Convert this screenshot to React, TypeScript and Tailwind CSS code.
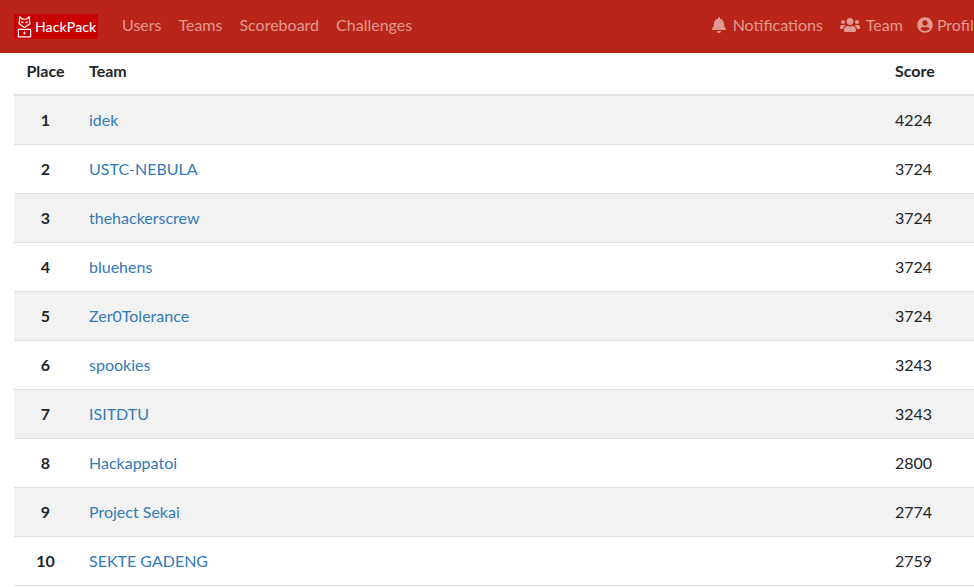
import { FaBell, FaUsers, FaUserCircle } from 'react-icons/fa';

const rows = [
  { place: 1, team: 'idek', score: 4224 },
  { place: 2, team: 'USTC-NEBULA', score: 3724 },
  { place: 3, team: 'thehackerscrew', score: 3724 },
  { place: 4, team: 'bluehens', score: 3724 },
  { place: 5, team: 'Zer0Tolerance', score: 3724 },
  { place: 6, team: 'spookies', score: 3243 },
  { place: 7, team: 'ISITDTU', score: 3243 },
  { place: 8, team: 'Hackappatoi', score: 2800 },
  { place: 9, team: 'Project Sekai', score: 2774 },
  { place: 10, team: 'SEKTE GADENG', score: 2759 },
];

const Logo = () => (
  <a className="flex h-[25px] w-[84px] shrink-0 items-center bg-[#c90000] pl-[3px] text-white">
    <svg viewBox="0 0 16 24" className="h-[23px] w-[15px]" fill="none" stroke="white" strokeWidth="1.3" strokeLinejoin="round">
      <path d="M3 1.5 L5.5 4 H10.5 L13 1.5 L13.5 7 Q14.5 9 12 10.5 L8 13 L4 10.5 Q1.5 9 2.5 7 Z" />
      <path d="M4.5 7 L7 8 M11.5 7 L9 8" />
      <path d="M1.5 15 H14.5 V23 H1.5 Z" />
      <path d="M6.5 19 H9.5 M8 17.5 V20.5" strokeWidth="1" />
    </svg>
    <span className="ml-[3px] font-['Lato',sans-serif] text-[14px] font-medium leading-none tracking-[0.1px]">HackPack</span>
  </a>
);

export default function App() {
  return (
    <div className="h-[587px] w-[974px] overflow-hidden bg-white font-['Lato',sans-serif] text-[16px] text-[#212529]">
      <nav className="flex h-[53px] items-center whitespace-nowrap bg-[#b92518] pl-[14px] text-[#e09890]">
        <Logo />
        <div className="mb-[4px] ml-[24px] flex shrink-0 gap-[17px]">
          <a>Users</a>
          <a>Teams</a>
          <a>Scoreboard</a>
          <a>Challenges</a>
        </div>
        <div className="mb-[4px] ml-[299.5px] flex shrink-0">
          <a className="mr-[17px] flex items-center gap-[7px]">
            <FaBell className="h-[16px] w-[14px]" />
            Notifications
          </a>
          <a className="mr-[14px] flex items-center gap-[6px]">
            <FaUsers className="h-[16px] w-[20px]" />
            Team
          </a>
          <a className="flex items-center gap-[4px]">
            <FaUserCircle className="h-[16px] w-[16px]" />
            Profile
          </a>
        </div>
      </nav>
      <div className="pl-[14px]">
        <table className="w-[960px] table-fixed border-collapse">
          <thead>
            <tr className="h-[42px] border-b-2 border-[#dee2e6] text-left font-bold">
              <th className="w-[63px] pb-[5px] text-center">Place</th>
              <th className="w-[818px] pb-[5px] pl-[12px]">Team</th>
              <th className="pb-[5px]">Score</th>
            </tr>
          </thead>
          <tbody>
            {rows.map((r) => (
              <tr key={r.place} className="h-[49px] border-b border-[#dee2e6] odd:bg-[#f2f2f2]">
                <td className="text-center font-bold">{r.place}</td>
                <td className="pl-[12px]">
                  <a className="text-[#337ab7]">{r.team}</a>
                </td>
                <td>{r.score}</td>
              </tr>
            ))}
          </tbody>
        </table>
      </div>
    </div>
  );
}
